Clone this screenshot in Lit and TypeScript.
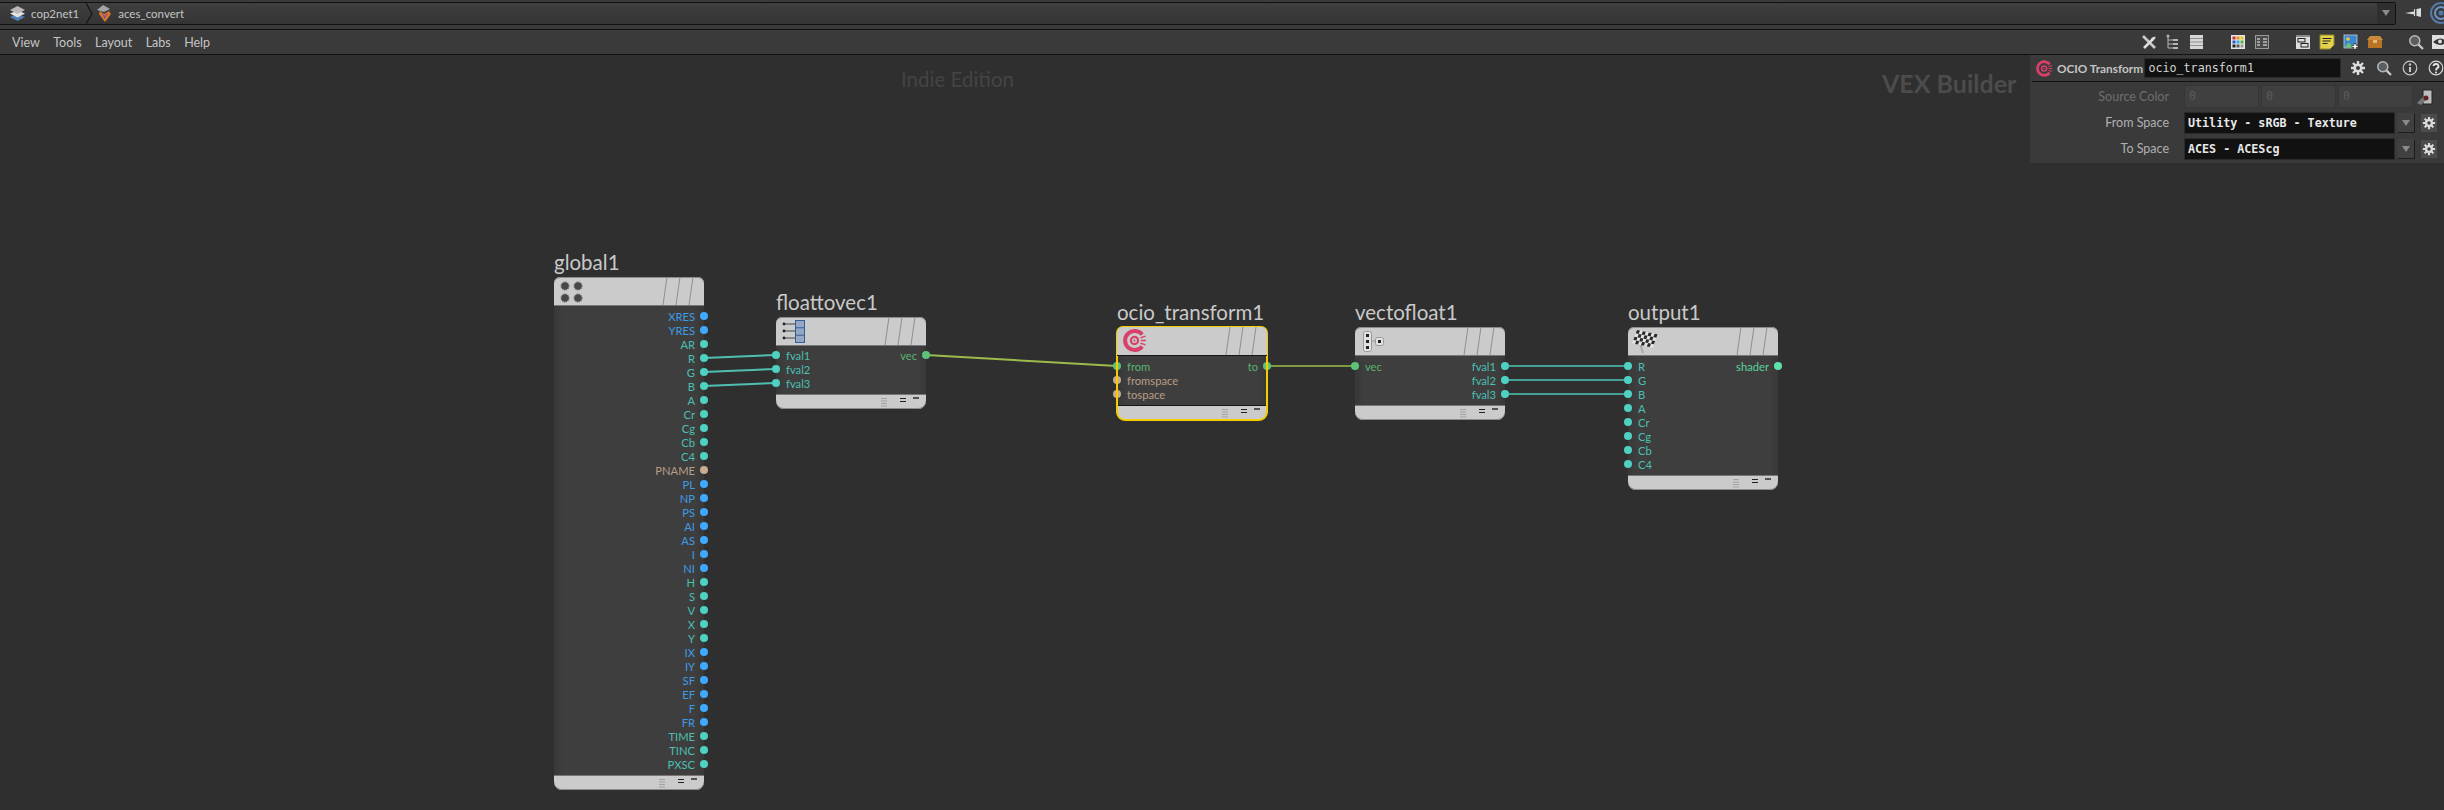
import { LitElement, html, css, svg, nothing } from "lit";
import { customElement, property } from "lit/decorators.js";

const CANVAS_TOP = 55;

const TEAL = "#4fd1c1";
const BLUE = "#3fa9ff";
const TAN = "#c9ac90";
const GREEN = "#5cc47a";
const MINT = "#5fe3a9";

type Port = { label: string; color: string };
type Row = { l?: Port; r?: Port };

const p = (label: string, color: string): Port => ({ label, color });

const gear = (size = 16) => svg`<svg width=${size} height=${size} viewBox="0 0 16 16">
  <g stroke="#dcdcdc" stroke-width="2.4">
    <path d="M8 1v14M1 8h14M3 3l10 10M13 3L3 13" />
  </g>
  <circle cx="8" cy="8" r="4.6" fill="#dcdcdc" />
  <circle cx="8" cy="8" r="2" fill="#3a3a3a" />
</svg>`;

const lens = (size = 16) => svg`<svg width=${size} height=${size} viewBox="0 0 16 16" fill="none">
  <circle cx="6.8" cy="6.8" r="5" stroke="#b9b9b9" stroke-width="1.5" fill="#5a5f63" />
  <path d="M10.6 10.6L15 15" stroke="#c9c9c9" stroke-width="2.2" />
</svg>`;

const ocioMarks = svg`
  <path d="M19.2 6A9.6 9.6 0 1 0 19.2 18" stroke="#d8406a" stroke-width="4" />
  <circle cx="11.5" cy="12" r="3.6" stroke="#d8406a" stroke-width="2.2" />
  <circle cx="11.5" cy="12" r="1" fill="#d8406a" />
  <path d="M17.5 9.4l5-1.8M18 12h5M17.5 14.600l5 1.800" stroke="#d8406a" stroke-width="1.500" />
`;

const nodeIcons: Record<string, unknown> = {
  global: svg`<svg width="40" height="28" viewBox="0 0 40 28">
    <g fill="#474747" stroke="#5e5e5e" stroke-width="1.4" stroke-dasharray="1 1">
      <circle cx="11" cy="9" r="3.8" /><circle cx="24" cy="9" r="3.800" />
      <circle cx="11" cy="21" r="3.800" /><circle cx="24" cy="21" r="3.800" />
    </g>
  </svg>`,
  merge: svg`<svg width="40" height="28" viewBox="0 0 40 28">
    <g stroke="#888" stroke-width="2"><path d="M8 7h12M8 14h12M8 21h12" /></g>
    <g fill="#222"><circle cx="8" cy="7" r="1.400" /><circle cx="8" cy="14" r="1.400" /><circle cx="8" cy="21" r="1.400" /></g>
    <rect x="19.500" y="3.500" width="9" height="22" fill="#94a8c4" stroke="#335d99" stroke-width="1" />
    <path d="M19.500 10.800h9M19.500 18.200h9" stroke="#335d99" stroke-width="1" />
  </svg>`,
  ocio: svg`<svg width="40" height="28" viewBox="0 0 40 28" fill="none">
    <g transform="translate(6 1.500)">${ocioMarks}</g>
  </svg>`,
  split: svg`<svg width="40" height="28" viewBox="0 0 40 28" fill="none">
    <rect x="8.500" y="4.500" width="8" height="20" rx="2" fill="#e2e2e2" stroke="#9a9a9a" />
    <g fill="#222"><rect x="11" y="7" width="3" height="3" /><rect x="11" y="13" width="3" height="3" /><rect x="11" y="19" width="3" height="3" /></g>
    <path d="M17 14h4" stroke="#999" />
    <rect x="20.500" y="10.500" width="8" height="8" rx="2" fill="#e2e2e2" stroke="#9a9a9a" />
    <rect x="23" y="13" width="3" height="3" fill="#222" />
  </svg>`,
  flag: svg`<svg width="40" height="28" viewBox="0 0 40 28">
    <path d="M9 7l6 19" stroke="#a8a8a8" stroke-width="2" />
    <g transform="translate(9 3) rotate(12) skewX(-8)">
      <rect width="21" height="14" fill="#e4e4e4" />
      ${[0, 1, 2, 3, 4, 5, 6].map((c) =>
        [0, 1, 2, 3].map((r) =>
          (c + r) % 2 === 0 ? svg`<rect x=${c * 3} y=${r * 3.5} width="3" height="3.500" fill="#2a2a2a" />` : nothing,
        ),
      )}
    </g>
  </svg>`,
};

@customElement("vop-node")
export class VopNode extends LitElement {
  @property({ type: String }) name = "";
  @property({ type: String }) icon = "global";
  @property({ type: Boolean }) selected = false;
  @property({ type: Boolean }) compact = false;
  @property({ attribute: false }) rows: Row[] = [];

  static styles = css`
    :host {
      display: block;
      position: absolute;
      width: 150px;
      font-family: Lato, "Noto Sans", sans-serif;
    }
    svg {
      display: block;
    }
    .title {
      position: absolute;
      left: 0;
      bottom: 100%;
      margin-bottom: 1px;
      font-size: 20.5px;
      line-height: 28px;
      color: #c9c9c9;
      white-space: nowrap;
    }
    .box {
      border-radius: 6px 6px 8px 8px;
    }
    .selected {
      outline: 2px solid #f4cc00;
      outline-offset: -1px;
    }
    .head {
      position: relative;
      height: 28px;
      background: #cbcbcb;
      border-radius: 6px 6px 0 0;
      border-bottom: 1px solid #777;
      box-shadow: inset 0 1px 0 #8c8c8c;
      overflow: hidden;
    }
    .selected .head {
      border-bottom-color: #151515;
      box-shadow: none;
    }
    .slashes {
      position: absolute;
      top: 0;
      right: 0;
    }
    .body {
      background: linear-gradient(90deg, #383838, #3e3e3e 6%, #3e3e3e 94%, #383838);
      padding: 3px 0 4px;
    }
    .compact .body {
      padding-top: 2px;
    }
    .row {
      display: flex;
      justify-content: space-between;
      height: 14px;
      align-items: center;
      font-size: 11.2px;
    }
    .side {
      display: flex;
      align-items: center;
      gap: 6px;
    }
    .side.left {
      margin-left: -4px;
    }
    .side.right {
      margin-left: auto;
      margin-right: -4px;
      gap: 5px;
    }
    .dot {
      width: 8px;
      height: 8px;
      border-radius: 50%;
    }
    .foot {
      height: 14px;
      background: #cbcbcb;
      border-top: 1px solid #777;
      border-radius: 0 0 8px 8px;
      box-shadow: inset 0 -1px 0 #8c8c8c;
      display: flex;
      justify-content: flex-end;
    }
    .selected .foot {
      border-top-color: #151515;
      box-shadow: none;
    }
  `;

  private side(port: Port, kind: "left" | "right") {
    const dot = html`<span class="dot" style="background:${port.color}"></span>`;
    const text = html`<span style="color:${port.color};opacity:.88">${port.label}</span>`;
    return html`<span class="side ${kind}">${kind === "left" ? html`${dot}${text}` : html`${text}${dot}`}</span>`;
  }

  render() {
    return html`
      <div class="title">${this.name}</div>
      <div class="box ${this.selected ? "selected" : ""} ${this.compact ? "compact" : ""}">
        <div class="head">
          ${nodeIcons[this.icon]}
          <svg class="slashes" width="50" height="28" viewBox="0 0 50 28" stroke="#8e8e8e" fill="none">
            <path d="M9 28l4-28M22 28l4-28M35 28l4-28" />
          </svg>
        </div>
        <div class="body">
          ${this.rows.map(
            (row) => html`<div class="row">
              ${row.l ? this.side(row.l, "left") : nothing}
              ${row.r ? this.side(row.r, "right") : nothing}
            </div>`,
          )}
        </div>
        <div class="foot">
          <svg width="50" height="14" viewBox="0 0 50 14" fill="none">
            <path d="M5 3.500h6M5 6h6M5 8.500h6M5 11h6" stroke="#a2a2a2" />
            <path d="M24 3.500h6M24 6.500h6" stroke="#222" stroke-width="1.200" />
            <path d="M37 3h6" stroke="#222" stroke-width="1.400" />
          </svg>
        </div>
      </div>
    `;
  }
}

const globalPorts: Row[] = [
  ["XRES", BLUE], ["YRES", BLUE], ["AR", TEAL], ["R", TEAL], ["G", TEAL], ["B", TEAL], ["A", TEAL],
  ["Cr", TEAL], ["Cg", TEAL], ["Cb", TEAL], ["C4", TEAL], ["PNAME", TAN], ["PL", BLUE], ["NP", BLUE],
  ["PS", BLUE], ["AI", BLUE], ["AS", BLUE], ["I", BLUE], ["NI", BLUE], ["H", TEAL], ["S", TEAL],
  ["V", TEAL], ["X", TEAL], ["Y", TEAL], ["IX", BLUE], ["IY", BLUE], ["SF", BLUE], ["EF", BLUE],
  ["F", BLUE], ["FR", BLUE], ["TIME", TEAL], ["TINC", TEAL], ["PXSC", TEAL],
].map(([label, color]) => ({ r: p(label, color) }));

const nodes = [
  { name: "global1", icon: "global", x: 554, y: 277, rows: globalPorts },
  {
    name: "floattovec1", icon: "merge", x: 776, y: 317, compact: true,
    rows: [
      { l: p("fval1", TEAL), r: p("vec", GREEN) },
      { l: p("fval2", TEAL) },
      { l: p("fval3", TEAL) },
    ],
  },
  {
    name: "ocio_transform1", icon: "ocio", x: 1117, y: 327, selected: true,
    rows: [
      { l: p("from", GREEN), r: p("to", GREEN) },
      { l: p("fromspace", TAN) },
      { l: p("tospace", TAN) },
    ],
  },
  {
    name: "vectofloat1", icon: "split", x: 1355, y: 327,
    rows: [
      { l: p("vec", GREEN), r: p("fval1", TEAL) },
      { r: p("fval2", TEAL) },
      { r: p("fval3", TEAL) },
    ],
  },
  {
    name: "output1", icon: "flag", x: 1628, y: 327,
    rows: [
      { l: p("R", TEAL), r: p("shader", MINT) },
      { l: p("G", TEAL) },
      { l: p("B", TEAL) },
      { l: p("A", TEAL) },
      { l: p("Cr", TEAL) },
      { l: p("Cg", TEAL) },
      { l: p("Cb", TEAL) },
      { l: p("C4", TEAL) },
    ],
  },
];

const wires = [
  { d: [704, 358, 776, 355], color: "#4fbfb2" },
  { d: [704, 372, 776, 369], color: "#4fbfb2" },
  { d: [704, 386, 776, 383], color: "#4fbfb2" },
  { d: [926, 355, 1117, 366], color: "#9dbb4c" },
  { d: [1267, 366, 1355, 366], color: "#7f9c45" },
  { d: [1505, 366, 1628, 366], color: "#46a095" },
  { d: [1505, 380, 1628, 380], color: "#46a095" },
  { d: [1505, 394, 1628, 394], color: "#46a095" },
];

@customElement("app-root")
export class AppRoot extends LitElement {
  static styles = css`
    :host {
      display: flex;
      flex-direction: column;
      width: 2444px;
      height: 810px;
      overflow: hidden;
      background: #2f2f2f;
      font-family: Lato, "Noto Sans", sans-serif;
      color: #c4c4c4;
    }
    svg {
      display: block;
      flex: none;
    }
    .strip {
      display: flex;
      align-items: center;
      height: 29px;
      flex: none;
      background: #3a3a3a;
      border-bottom: 1px solid #111;
      box-sizing: content-box;
    }
    .path-bar {
      display: flex;
      align-items: center;
      flex: 1;
      height: 21px;
      margin-bottom: 3px;
      background: linear-gradient(#3f3f3f, #343434);
      border: 1px solid #111;
      border-left: 0;
      border-radius: 0 2px 2px 0;
      font-size: 11.5px;
    }
    .crumb {
      display: flex;
      align-items: center;
      gap: 5px;
    }
    .crumb.first {
      margin-left: 9px;
    }
    .crumb.second {
      margin-left: 3px;
    }
    .chevron {
      margin-left: 7px;
    }
    .path-arrow {
      margin-left: auto;
      width: 18px;
      height: 21px;
      display: flex;
      align-items: center;
      justify-content: center;
      background: #2f2f2f;
    }
    .strip-icons {
      display: flex;
      align-items: center;
      gap: 9px;
      margin: 0 -8px 3px 9px;
    }
    .menu-row {
      display: flex;
      align-items: center;
      height: 24px;
      flex: none;
      background: #3a3a3a;
      border-bottom: 1px solid #111;
      font-size: 12.5px;
      padding-left: 12px;
    }
    .menu {
      display: flex;
      gap: 13.4px;
    }
    .tools {
      display: flex;
      align-items: center;
      margin-left: auto;
      margin-right: -4px;
      gap: 25px;
    }
    .group {
      display: flex;
      gap: 8px;
    }
    .canvas {
      position: relative;
      flex: 1;
    }
    .wires {
      position: absolute;
      left: 0;
      top: 0;
    }
    .watermark {
      position: absolute;
      white-space: nowrap;
    }
    .indie {
      left: 901px;
      top: 11px;
      font-size: 20.5px;
      line-height: 26px;
      color: #444;
    }
    .vex {
      left: 1882px;
      top: 11px;
      font-size: 25px;
      line-height: 34px;
      font-weight: 700;
      color: #4c4c4c;
    }
    .panel {
      position: absolute;
      right: 0;
      top: 0;
      width: 414px;
      height: 108px;
      background: #3a3a3a;
      font-size: 12.5px;
    }
    .panel-head {
      display: flex;
      align-items: center;
      height: 26px;
      border-bottom: 1px solid #111;
      margin-left: 2px;
      padding-left: 4px;
    }
    .op-type {
      font-weight: 700;
      font-size: 11.8px;
      margin-left: 4px;
      width: 88px;
      white-space: nowrap;
    }
    .name-field {
      width: 198px;
      height: 20px;
      box-sizing: border-box;
      padding-left: 3px;
      background: #111;
      border: 1px solid #2a2a2a;
      font: 11.7px/18px "DejaVu Sans Mono", monospace;
      color: #d4d4d4;
    }
    .head-icons {
      display: flex;
      align-items: center;
      gap: 10px;
      margin-left: 9px;
    }
    .parm {
      display: flex;
      align-items: center;
      height: 23px;
      margin-top: 3px;
    }
    .parm-label {
      width: 139px;
      text-align: right;
      margin-right: 15px;
      color: #b0b0b0;
    }
    .parm.off .parm-label {
      color: #6e6e6e;
    }
    .vec {
      display: flex;
      gap: 2px;
    }
    .vec span {
      width: 75px;
      height: 23px;
      box-sizing: border-box;
      padding-left: 4px;
      background: #404040;
      border: 1px solid #363636;
      font: 11.7px/21px "DejaVu Sans Mono", monospace;
      color: #5c5c5c;
    }
    .combo {
      width: 211px;
      height: 22px;
      box-sizing: border-box;
      padding-left: 3px;
      background: #111;
      border: 1px solid #2a2a2a;
      font: 700 11.7px/20px "DejaVu Sans Mono", monospace;
      color: #e8e8e8;
      white-space: nowrap;
    }
    .combo-btn {
      display: flex;
      align-items: center;
      justify-content: center;
      width: 17px;
      height: 19px;
      margin: 0 7px 0 2px;
      background: #404040;
      box-shadow: 1px 1px 0 #1c1c1c;
    }
    .cell {
      display: flex;
      align-items: center;
      justify-content: center;
      width: 16px;
      height: 18px;
      background: #4c4c4c;
    }
    .socket {
      margin-left: 4px;
    }
  `;

  private arrow() {
    return html`<svg width="8" height="6" viewBox="0 0 8 6"><path d="M0 0h8L4 6z" fill="#8a8a8a" /></svg>`;
  }

  render() {
    return html`
      <div class="strip">
        <div class="path-bar">
          <span class="crumb first">
            <svg width="17" height="17" viewBox="0 0 17 17">
              <path d="M1 12l7.500-3 7.500 3-7.500 4z" fill="#4f7fb5" />
              <path d="M1 8.500l7.500-3 7.500 3-7.500 4z" fill="#e4e4e4" />
              <path d="M1 5l7.500-4 7.500 4-7.500 4z" fill="#b9b9b9" />
            </svg>
            cop2net1
          </span>
          <svg class="chevron" width="7" height="21" viewBox="0 0 7 21" fill="none">
            <path d="M0 0l6 10.500L0 21" stroke="#151515" stroke-width="1.200" />
          </svg>
          <span class="crumb second">
            <svg width="17" height="19" viewBox="0 0 17 19">
              <path d="M1 6l6-5 7 4-6 3z" fill="#a5a5a5" />
              <path d="M4 7l4 3 5-3 2 3-6 8-6-8z" fill="#d8762c" />
              <path d="M5.500 8l3 4 3.500-4-3.200 7z" fill="#7f4ba8" />
            </svg>
            aces_convert
          </span>
          <span class="path-arrow">${this.arrow()}</span>
        </div>
        <div class="strip-icons">
          <svg width="16" height="14" viewBox="0 0 16 14">
            <path d="M0 7l9-1.500V3h3l4-1v9l-4-1H9V8.500z" fill="#dcdcdc" />
            <rect x="10" y="3" width="1.500" height="7.500" fill="#444" />
          </svg>
          <svg width="22" height="22" viewBox="0 0 22 22" fill="none">
            <circle cx="11" cy="11" r="10" stroke="#5479a8" stroke-width="2" />
            <circle cx="11" cy="11" r="6" stroke="#6b93c6" stroke-width="2" />
            <circle cx="11" cy="11" r="2.500" fill="#4d79ad" />
          </svg>
        </div>
      </div>
      <div class="menu-row">
        <div class="menu">
          <span>View</span><span>Tools</span><span>Layout</span><span>Labs</span><span>Help</span>
        </div>
        <div class="tools">
          <div class="group">
            <svg width="16" height="16" viewBox="0 0 16 16" fill="none">
              <path d="M2 2l12 12" stroke="#c8c8c8" stroke-width="2.600" />
              <path d="M3 14L12 5" stroke="#dcdcdc" stroke-width="2.600" />
              <path d="M14.500 2.500a3.500 3.500 0 0 1-4.800 3.800L11 3.500z" fill="#dcdcdc" />
            </svg>
            <svg width="16" height="16" viewBox="0 0 16 16" fill="none">
              <path d="M3 1v13M3 6h5M3 10h5M3 14h5" stroke="#b5b5b5" />
              <path d="M8 5h5v2H8zM8 9h5v2H8zM8 13h5v2H8z" fill="#b5b5b5" />
              <circle cx="3" cy="2" r="1.500" fill="#b5b5b5" />
            </svg>
            <svg width="16" height="16" viewBox="0 0 16 16">
              <rect x="1" y="1" width="13" height="14" fill="#d6d6d6" />
              <path d="M1 4.500h13M1 8h13M1 11.500h13" stroke="#8f8f8f" />
            </svg>
          </div>
          <div class="group">
            <svg width="16" height="16" viewBox="0 0 16 16">
              <rect x="1" y="1" width="14" height="14" fill="#e6e6e6" />
              <rect x="2.500" y="2.500" width="3" height="3" fill="#d32f2f" /><rect x="6.500" y="2.500" width="3" height="3" fill="#e8921a" /><rect x="10.500" y="2.500" width="3" height="3" fill="#e8c81a" />
              <rect x="2.500" y="6.500" width="3" height="3" fill="#2f56c8" /><rect x="6.500" y="6.500" width="3" height="3" fill="#3aa8d8" /><rect x="10.500" y="6.500" width="3" height="3" fill="#5bb03a" />
              <rect x="2.500" y="10.500" width="3" height="3" fill="#222" /><rect x="6.500" y="10.500" width="3" height="3" fill="#555" /><rect x="10.500" y="10.500" width="3" height="3" fill="#999" />
            </svg>
            <svg width="16" height="16" viewBox="0 0 16 16" fill="none">
              <rect x="1.500" y="1.500" width="13" height="13" stroke="#9a9a9a" fill="#4a4a4a" />
              <path d="M3 5h3M3 8h3M3 11h3M9 5h4M9 8h4M9 11h4" stroke="#bdbdbd" stroke-width="1.500" />
            </svg>
          </div>
          <div class="group">
            <svg width="16" height="16" viewBox="0 0 16 16" fill="none">
              <rect x="1" y="1" width="14" height="14" fill="#dedede" />
              <rect x="3" y="4.500" width="7" height="3.500" stroke="#222" />
              <rect x="6" y="9.500" width="7" height="3.500" stroke="#222" />
              <path d="M1 2h14" stroke="#333" />
            </svg>
            <svg width="16" height="16" viewBox="0 0 16 16" fill="none">
              <path d="M1 1h14v10l-4 4H1z" fill="#e5d24a" stroke="#8f8a2e" />
              <path d="M3.500 4.500h9M3.500 7h8M3.500 9.500h5" stroke="#222" stroke-width="1.200" />
            </svg>
            <svg width="16" height="16" viewBox="0 0 16 16">
              <rect x="1" y="1" width="13" height="13" fill="#3d86d4" stroke="#ccc" stroke-width="0.800" />
              <circle cx="5" cy="5" r="1.800" fill="#f0d030" />
              <path d="M1.500 13.500l4-5 3 3 2-1.500 3 3.500z" fill="#6ec56e" />
              <path d="M11 9.500h2v2h2v2h-2v2h-2v-2H9v-2h2z" fill="#fff" stroke="#111" stroke-width="0.600" />
            </svg>
            <svg width="16" height="16" viewBox="0 0 16 16">
              <path d="M3 2h10l3 4H0z" fill="#c98a3c" />
              <path d="M1 6h14v8H1z" fill="#b87425" />
              <rect x="6" y="6" width="4" height="3" fill="#e5b877" />
            </svg>
          </div>
          <div class="group">
            ${lens()}
            <svg width="16" height="16" viewBox="0 0 16 16">
              <rect x="0" y="1" width="16" height="14" fill="#dedede" />
              <path d="M1 8q7-7 14 0q-7 6-14 0z" fill="#333" />
              <circle cx="8" cy="7.500" r="2" fill="#ddd" />
            </svg>
          </div>
        </div>
      </div>
      <div class="canvas">
        <div class="watermark indie">Indie Edition</div>
        <div class="watermark vex">VEX Builder</div>
        <svg class="wires" width="2444" height="755" viewBox="0 ${CANVAS_TOP} 2444 755" fill="none">
          ${wires.map(
            (w) => svg`<line x1=${w.d[0]} y1=${w.d[1]} x2=${w.d[2]} y2=${w.d[3]} stroke=${w.color} stroke-width="2" />`,
          )}
        </svg>
        ${nodes.map(
          (n) => html`<vop-node
            style="left:${n.x}px;top:${n.y - CANVAS_TOP}px"
            .name=${n.name}
            .icon=${n.icon}
            .rows=${n.rows}
            .selected=${!!n.selected}
            .compact=${!!n.compact}
          ></vop-node>`,
        )}
        <div class="panel">
          <div class="panel-head">
            <svg width="17" height="17" viewBox="0 0 24 24" fill="none">${ocioMarks}</svg>
            <span class="op-type">OCIO Transform</span>
            <span class="name-field">ocio_transform1</span>
            <span class="head-icons">
              ${gear()} ${lens()}
              <svg width="16" height="16" viewBox="0 0 16 16" fill="none">
                <circle cx="8" cy="8" r="6.800" stroke="#c8c8c8" stroke-width="1.200" />
                <path d="M8 7v5" stroke="#c8c8c8" stroke-width="2" /><circle cx="8" cy="4.500" r="1.200" fill="#c8c8c8" />
              </svg>
              <svg width="16" height="16" viewBox="0 0 16 16" fill="none">
                <circle cx="8" cy="8" r="6.800" stroke="#d8d8d8" stroke-width="1.200" />
                <path d="M5.500 6a2.500 2.200 0 1 1 3.500 2.200Q8 9 8 10.500" stroke="#e8e8e8" stroke-width="1.800" /><circle cx="8" cy="12.500" r="1" fill="#e8e8e8" />
              </svg>
            </span>
          </div>
          <div class="parm off">
            <span class="parm-label">Source Color</span>
            <span class="vec"><span>0</span><span>0</span><span>0</span></span>
            <svg class="socket" width="16" height="16" viewBox="0 0 16 16">
              <rect x="6" y="1" width="9" height="14" fill="#bdbdbd" stroke="#222" />
              <path d="M0 14l6-6 3 3-5 5z" fill="#777" />
              <circle cx="9" cy="9" r="2.500" fill="#5e2222" />
            </svg>
          </div>
          <div class="parm">
            <span class="parm-label">From Space</span>
            <span class="combo">Utility - sRGB - Texture</span>
            <span class="combo-btn">${this.arrow()}</span>
            <span class="cell">${gear(14)}</span>
          </div>
          <div class="parm">
            <span class="parm-label">To Space</span>
            <span class="combo">ACES - ACEScg</span>
            <span class="combo-btn">${this.arrow()}</span>
            <span class="cell">${gear(14)}</span>
          </div>
        </div>
      </div>
    `;
  }
}
